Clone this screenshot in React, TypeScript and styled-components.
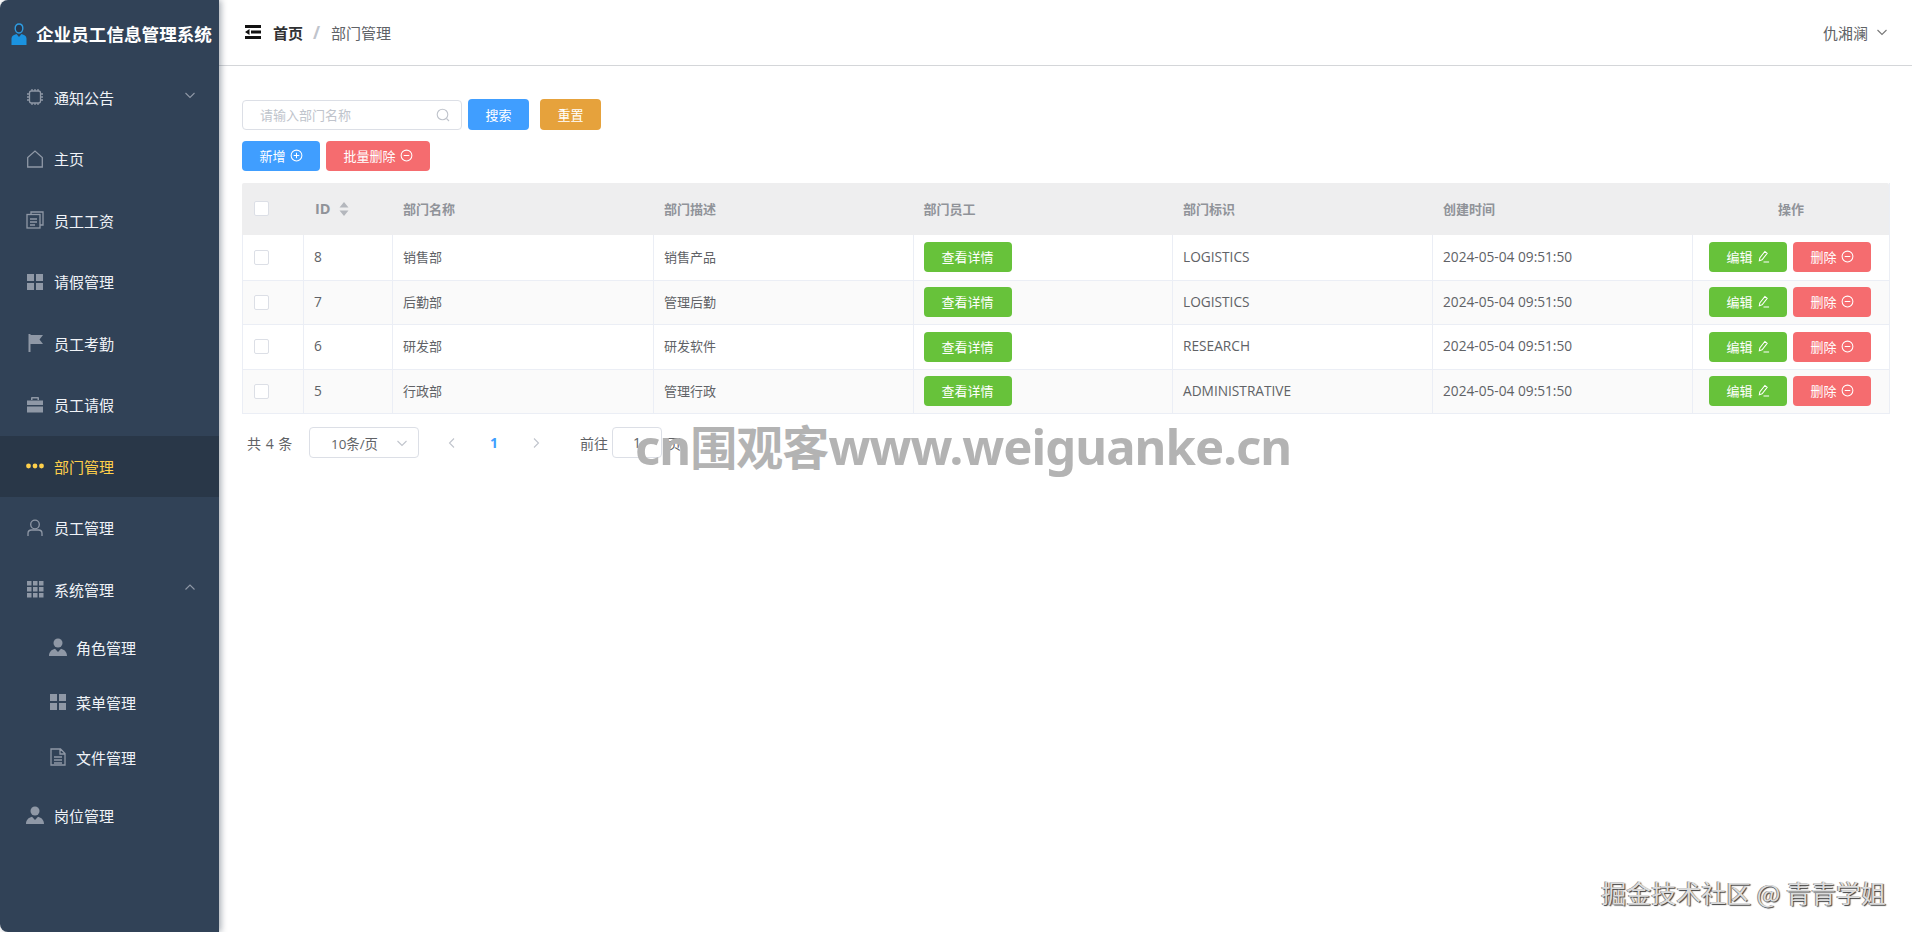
import React from "react";
import styled, { createGlobalStyle } from "styled-components";

const GlobalStyle = createGlobalStyle`
  * { box-sizing: border-box; }
  html, body { margin: 0; padding: 0; height: 100%; background: #fff; }
  body { font-family: "Open Sans", "Noto Sans CJK SC", sans-serif; overflow: hidden; }
`;

const Page = styled.div`
  position: relative;
  display: flex;
  width: 100%;
  height: 100vh;
  overflow: hidden;
`;

const Sidebar = styled.aside`
  flex: 0 0 219px;
  background: #314257;
  border-radius: 8px 0 0 8px;
  box-shadow: 2px 0 6px rgba(0, 21, 41, 0.35);
  z-index: 1;
`;

const Brand = styled.div`
  height: 66.5px;
  display: flex;
  align-items: center;
  gap: 9px;
  padding: 1px 0 0 11px;
  color: #fff;
  font-size: 17.6px;
  font-weight: 700;
  white-space: nowrap;
`;

const MenuItem = styled.div<{ $active?: boolean; $sub?: boolean }>`
  height: ${(p) => (p.$sub ? "54.85px" : "61.5px")};
  display: flex;
  align-items: center;
  gap: ${(p) => (p.$sub ? "9px" : "10px")};
  padding-left: ${(p) => (p.$sub ? "49px" : "26px")};
  color: ${(p) => (p.$active ? "#ffd04b" : "#f0f3f7")};
  background: ${(p) => (p.$active ? "#293748" : "transparent")};
  font-size: 15px;
  svg.lead {
    width: 18px;
    height: 18px;
    flex: none;
    color: ${(p) => (p.$active ? "#ffd04b" : "#8f98a6")};
  }
`;

const MenuArrow = styled.svg`
  width: 12px;
  height: 12px;
  margin-left: auto;
  margin-right: 23px;
  margin-top: -4px;
  color: #8f98a6;
`;

const Main = styled.main`
  flex: 1;
  min-width: 0;
  display: flex;
  flex-direction: column;
`;

const TopBar = styled.header`
  height: 66px;
  flex: none;
  display: flex;
  align-items: center;
  padding: 0 24px 1px 26px;
  border-bottom: 1px solid #d4d6d9;
  font-size: 15px;
`;

const FoldIcon = styled.svg`
  width: 16px;
  height: 14px;
  margin-right: 12px;
  color: #111;
`;

const CrumbHome = styled.span`
  color: #303133;
  font-weight: 700;
`;

const CrumbSlash = styled.span`
  color: #c0c4cc;
  margin: 0 11px 0 10px;
  font-size: 17px;
  font-weight: 700;
`;

const CrumbPage = styled.span`
  color: #606266;
`;

const UserMenu = styled.div`
  margin-left: auto;
  display: flex;
  align-items: center;
  gap: 8px;
  color: #606266;
  svg {
    width: 12px;
    height: 12px;
    color: #777;
  }
`;

const Content = styled.div`
  flex: 1;
  padding: 33px 22px 0 23px;
`;

const SearchRow = styled.div`
  display: flex;
  align-items: center;
  height: 31px;
  margin-bottom: 11px;
`;

const ActionRow = styled.div`
  display: flex;
  gap: 6px;
  height: 30px;
  margin-bottom: 12px;
`;

const SearchBox = styled.div`
  width: 220px;
  height: 30px;
  display: flex;
  align-items: center;
  justify-content: space-between;
  padding: 0 11px 0 17px;
  margin-right: 6px;
  border: 1px solid #dcdfe6;
  border-radius: 4px;
  color: #c0c4cc;
  font-size: 13px;
  svg {
    width: 14px;
    height: 14px;
  }
`;

const colors = {
  blue: "#409eff",
  orange: "#e6a23c",
  red: "#f56c6f",
  green: "#67c23a",
};

const Button = styled.button<{ $tone: keyof typeof colors; $width: number; $tall?: boolean }>`
  width: ${(p) => p.$width}px;
  height: ${(p) => (p.$tall ? "31px" : "30px")};
  display: inline-flex;
  align-items: center;
  justify-content: center;
  gap: 4px;
  padding: 0 0 1px;
  border: none;
  border-radius: 4px;
  background: ${(p) => colors[p.$tone]};
  color: #fff;
  font-family: inherit;
  font-size: 13px;
  svg {
    width: 13px;
    height: 13px;
  }
`;

const ResetGap = styled.span`
  width: 11px;
`;

const Table = styled.div`
  width: 100%;
  border-bottom: 1px solid #ebeef5;
  border-right: 1px solid #ebeef5;
  font-size: 13px;
`;

const columns = "61px 89px 261px 259.5px 259.5px 260px 260px 198px";

const HeadRow = styled.div`
  display: grid;
  grid-template-columns: ${columns};
  height: 52px;
  background: #eeeeef;
  border-radius: 2px 2px 0 0;
  color: #909399;
  font-weight: 700;
`;

const HeadCell = styled.div<{ $center?: boolean }>`
  display: flex;
  align-items: center;
  justify-content: ${(p) => (p.$center ? "center" : "flex-start")};
  gap: 8px;
  padding-left: ${(p) => (p.$center ? "0" : "11px")};
  padding-bottom: 1px;
`;

const HeadLatin = styled.span`
  font-size: 14.5px;
  margin-left: 1px;
`;

const BodyRow = styled.div<{ $striped?: boolean }>`
  display: grid;
  grid-template-columns: ${columns};
  height: 44.5px;
  background: ${(p) => (p.$striped ? "#fafafa" : "#fff")};
  color: #606266;
  & + & {
    border-top: 1px solid #ebeef5;
  }
`;

const Cell = styled.div<{ $actions?: boolean }>`
  display: flex;
  align-items: center;
  gap: 6px;
  padding-left: ${(p) => (p.$actions ? "16px" : "10px")};
  border-left: 1px solid #ebeef5;
`;

const CellText = styled.span<{ $latin?: boolean }>`
  margin-bottom: 2px;
  font-size: ${(p) => (p.$latin ? "13.7px" : "13px")};
`;

const Check = styled.span`
  width: 15px;
  height: 15px;
  margin-left: 1px;
  background: #fff;
  border: 1px solid #dcdfe6;
  border-radius: 2px;
`;

const SortIcon = styled.svg`
  width: 10px;
  height: 16px;
  color: #b4b7bd;
`;

const Pager = styled.div`
  display: flex;
  align-items: center;
  height: 31px;
  margin-top: 13px;
  padding-left: 5px;
  color: #606266;
  font-size: 14px;
`;

const Total = styled.span`
  width: 62px;
  word-spacing: 1px;
`;

const PageSize = styled.div`
  width: 110px;
  height: 31px;
  display: flex;
  align-items: center;
  justify-content: space-between;
  padding: 0 10px 0 21px;
  border: 1px solid #dcdfe6;
  border-radius: 4px;
  font-size: 13.4px;
  svg {
    width: 12px;
    height: 12px;
    color: #c0c4cc;
  }
`;

const PagerArrow = styled.svg<{ $dim?: boolean }>`
  width: 12px;
  height: 12px;
  margin-left: ${(p) => (p.$dim ? "27px" : "32px")};
  color: #c0c4cc;
`;

const PageNo = styled.span`
  margin-left: 32px;
  width: 8px;
  color: #409eff;
  font-weight: 700;
  font-size: 14px;
`;

const JumpLabel = styled.span`
  margin-left: 38px;
`;

const JumpInput = styled.div`
  width: 50px;
  height: 31px;
  margin: 0 5px 0 4px;
  display: flex;
  align-items: center;
  justify-content: center;
  border: 1px solid #dcdfe6;
  border-radius: 4px;
`;

const SiteMark = styled.div`
  position: absolute;
  left: 635px;
  top: 410px;
  z-index: 2;
  color: #b3b3b3;
  font-family: "Noto Sans", "Noto Sans CJK SC", sans-serif;
  font-weight: 700;
  font-size: 49px;
  line-height: 72px;
  letter-spacing: -0.95px;
  white-space: nowrap;
`;

const MarkCjk = styled.span`
  font-size: 47px;
`;

const AuthorMark = styled.div`
  position: absolute;
  right: 26px;
  top: 876px;
  z-index: 2;
  color: #dcdcdc;
  font-family: "Noto Sans CJK SC", sans-serif;
  font-size: 25px;
  line-height: 32px;
  white-space: nowrap;
  text-shadow: 1px 1px 1px #3d3d3d, -1px 0 0 #8f8f8f;
`;

const stroke = { fill: "none", stroke: "currentColor", strokeWidth: 1.3 };

const Cpu = () => (
  <svg className="lead" viewBox="0 0 18 18" {...stroke}>
    <rect x="3.5" y="3" width="11" height="12" rx="2" />
    <path d="M6 1v2M9 1v2M12 1v2M6 15v2M9 15v2M12 15v2M1 6h2.500M1 9h2.500M1 12h2.500M14.500 6H17M14.500 9H17M14.500 12H17" />
  </svg>
);

const House = () => (
  <svg className="lead" viewBox="0 0 18 18" {...stroke}>
    <path d="M1.700 17V7.500L9 1l7.300 6.500V17z" />
  </svg>
);

const Docs = () => (
  <svg className="lead" viewBox="0 0 18 18" {...stroke}>
    <path d="M5 3.500V1h12v13h-3" />
    <rect x="1" y="3.500" width="13" height="13.500" />
    <path d="M4 8h7M4 11h7M4 14h5" />
  </svg>
);

const Squares = () => (
  <svg className="lead" viewBox="0 0 18 18" fill="currentColor">
    <rect x="1" y="1" width="7" height="7" />
    <rect x="10" y="1" width="7" height="7" />
    <rect x="1" y="10" width="7" height="7" />
    <rect x="10" y="10" width="7" height="7" />
  </svg>
);

const Flag = () => (
  <svg className="lead" viewBox="0 0 18 18" fill="currentColor">
    <path d="M2.500 0h2v18h-2zM4.500 1H17l-3.500 4.500L17 10H4.500z" />
  </svg>
);

const Briefcase = () => (
  <svg className="lead" viewBox="0 0 18 18" fill="currentColor">
    <path d="M6 1h6a1 1 0 0 1 1 1v2h-1.500V2.500h-5V4H5V2a1 1 0 0 1 1-1zM1 4.500h16V9H1zM1 10.500h16V16.500H1z" />
  </svg>
);

const Dots = () => (
  <svg className="lead" viewBox="0 0 18 18" fill="currentColor">
    <circle cx="2.500" cy="9" r="2.400" />
    <circle cx="9" cy="9" r="2.400" />
    <circle cx="15.500" cy="9" r="2.400" />
  </svg>
);

const UserLine = () => (
  <svg className="lead" viewBox="0 0 18 18" {...stroke}>
    <circle cx="9" cy="5.500" r="4.300" />
    <path d="M2 17v-2.500c0-2 1.500-3.500 3.500-3.500h7c2 0 3.500 1.500 3.500 3.500V17" />
  </svg>
);

const Grid = () => (
  <svg className="lead" viewBox="0 0 18 18" fill="currentColor">
    {[1, 7, 13].flatMap((y) =>
      [1, 7, 13].map((x) => <rect key={`${x}-${y}`} x={x} y={y} width="4.500" height="4.500" />)
    )}
  </svg>
);

const Custom = () => (
  <svg className="lead" viewBox="0 0 18 18" fill="currentColor">
    <circle cx="9" cy="5" r="4.500" />
    <path d="M0 18c0-4 2.500-6.500 6-7.300L9 14l3-3.300c3.500.8 6 3.300 6 7.300z" />
  </svg>
);

const FileIcon = () => (
  <svg className="lead" viewBox="0 0 18 18" {...stroke}>
    <path d="M2 1h9.500L16 5.500V17H2zM11 1v5h5M5 9h8M5 12h8M5 15h8" />
  </svg>
);

const Chevron = ({ d }: { d: "up" | "down" | "left" | "right" }) => {
  const paths = {
    up: "M1.500 8.500L6 4l4.500 4.500",
    down: "M1.500 4L6 8.500 10.500 4",
    left: "M8 1.500L3.500 6 8 10.500",
    right: "M4 1.500L8.500 6 4 10.500",
  };
  return <path d={paths[d]} fill="none" stroke="currentColor" strokeWidth="1.100" />;
};

const PlusCircle = () => (
  <svg viewBox="0 0 14 14" fill="none" stroke="currentColor" strokeWidth="1.100">
    <circle cx="7" cy="7" r="5.800" />
    <path d="M4 7h6M7 4v6" />
  </svg>
);

const MinusCircle = () => (
  <svg viewBox="0 0 14 14" fill="none" stroke="currentColor" strokeWidth="1.100">
    <circle cx="7" cy="7" r="5.800" />
    <path d="M4 7h6" />
  </svg>
);

const Pencil = () => (
  <svg viewBox="0 0 14 14" fill="none" stroke="currentColor" strokeWidth="1.100">
    <path d="M2.500 11.500l.5-3L8.500 1.500l2.500 2-5.500 7zM7 13h6" />
  </svg>
);

const Search = () => (
  <svg viewBox="0 0 14 14" fill="none" stroke="currentColor" strokeWidth="1.100">
    <circle cx="6.500" cy="6.500" r="5.300" />
    <path d="M10.500 10.500l2.500 2.500" />
  </svg>
);

const Logo = () => (
  <svg width="16" height="22" viewBox="0 0 16 22">
    <path d="M8 1c2.400 0 3.800 1.700 3.800 4.200 0 2.600-1.500 4.800-3.800 4.800S4.200 7.800 4.200 5.200C4.200 2.700 5.600 1 8 1z" fill="#26384f" stroke="#2f9be0" strokeWidth="1.400" />
    <path d="M0.500 22v-6.500c0-2.500 2.500-3.800 5-4.500L8 14l2.500-3c2.500.7 5 2 5 4.500V22z" fill="#1b93e0" />
  </svg>
);

const menuTop = [
  { label: "通知公告", icon: <Cpu />, arrow: "down" as const },
  { label: "主页", icon: <House /> },
  { label: "员工工资", icon: <Docs /> },
  { label: "请假管理", icon: <Squares /> },
  { label: "员工考勤", icon: <Flag /> },
  { label: "员工请假", icon: <Briefcase /> },
  { label: "部门管理", icon: <Dots />, active: true },
  { label: "员工管理", icon: <UserLine /> },
  { label: "系统管理", icon: <Grid />, arrow: "up" as const },
];

const subMenu = [
  { label: "角色管理", icon: <Custom /> },
  { label: "菜单管理", icon: <Squares /> },
  { label: "文件管理", icon: <FileIcon /> },
];

const rows = [
  { id: 8, name: "销售部", desc: "销售产品", code: "LOGISTICS" },
  { id: 7, name: "后勤部", desc: "管理后勤", code: "LOGISTICS" },
  { id: 6, name: "研发部", desc: "研发软件", code: "RESEARCH" },
  { id: 5, name: "行政部", desc: "管理行政", code: "ADMINISTRATIVE" },
];

const App = () => {
  return (
    <Page>
      <GlobalStyle />
      <Sidebar>
        <Brand>
          <Logo />
          企业员工信息管理系统
        </Brand>
        {menuTop.map((item) => (
          <MenuItem key={item.label} $active={item.active}>
            {item.icon}
            {item.label}
            {item.arrow && (
              <MenuArrow viewBox="0 0 12 12">
                <Chevron d={item.arrow} />
              </MenuArrow>
            )}
          </MenuItem>
        ))}
        {subMenu.map((item) => (
          <MenuItem key={item.label} $sub>
            {item.icon}
            {item.label}
          </MenuItem>
        ))}
        <MenuItem>
          <Custom />
          岗位管理
        </MenuItem>
      </Sidebar>
      <Main>
        <TopBar>
          <FoldIcon viewBox="0 0 16 14" fill="currentColor">
            <path d="M0 0h16v3H0zM6 5.500h10v3H6zM0 11h16v3H0zM4.500 4v6L0 7z" />
          </FoldIcon>
          <CrumbHome>首页</CrumbHome>
          <CrumbSlash>/</CrumbSlash>
          <CrumbPage>部门管理</CrumbPage>
          <UserMenu>
            仇湘澜
            <svg viewBox="0 0 12 12">
              <Chevron d="down" />
            </svg>
          </UserMenu>
        </TopBar>
        <Content>
          <SearchRow>
            <SearchBox>
              请输入部门名称
              <Search />
            </SearchBox>
            <Button $tone="blue" $width={61} $tall>搜索</Button>
            <ResetGap />
            <Button $tone="orange" $width={61} $tall>重置</Button>
          </SearchRow>
          <ActionRow>
            <Button $tone="blue" $width={78}>新增 <PlusCircle /></Button>
            <Button $tone="red" $width={104}>批量删除 <MinusCircle /></Button>
          </ActionRow>
          <Table>
            <HeadRow>
              <HeadCell><Check /></HeadCell>
              <HeadCell>
                <HeadLatin>ID</HeadLatin>
                <SortIcon viewBox="0 0 10 16" fill="currentColor">
                  <path d="M5 1l4.500 5.500H.5zM5 15L.5 9.500h9z" />
                </SortIcon>
              </HeadCell>
              <HeadCell>部门名称</HeadCell>
              <HeadCell>部门描述</HeadCell>
              <HeadCell>部门员工</HeadCell>
              <HeadCell>部门标识</HeadCell>
              <HeadCell>创建时间</HeadCell>
              <HeadCell $center>操作</HeadCell>
            </HeadRow>
            {rows.map((row, i) => (
              <BodyRow key={row.id} $striped={i % 2 === 1}>
                <Cell><Check /></Cell>
                <Cell><CellText $latin>{row.id}</CellText></Cell>
                <Cell><CellText>{row.name}</CellText></Cell>
                <Cell><CellText>{row.desc}</CellText></Cell>
                <Cell><Button $tone="green" $width={88}>查看详情</Button></Cell>
                <Cell><CellText $latin>{row.code}</CellText></Cell>
                <Cell><CellText $latin>2024-05-04 09:51:50</CellText></Cell>
                <Cell $actions>
                  <Button $tone="green" $width={78}>编辑 <Pencil /></Button>
                  <Button $tone="red" $width={78}>删除 <MinusCircle /></Button>
                </Cell>
              </BodyRow>
            ))}
          </Table>
          <Pager>
            <Total>共 4 条</Total>
            <PageSize>
              10条/页
              <svg viewBox="0 0 12 12">
                <Chevron d="down" />
              </svg>
            </PageSize>
            <PagerArrow $dim viewBox="0 0 12 12">
              <Chevron d="left" />
            </PagerArrow>
            <PageNo>1</PageNo>
            <PagerArrow viewBox="0 0 12 12">
              <Chevron d="right" />
            </PagerArrow>
            <JumpLabel>前往</JumpLabel>
            <JumpInput>1</JumpInput>
            页
          </Pager>
        </Content>
      </Main>
      <SiteMark>cn<MarkCjk>围观客</MarkCjk>www.weiguanke.cn</SiteMark>
      <AuthorMark>掘金技术社区 @ 青青学姐</AuthorMark>
    </Page>
  );
};

export default App;
